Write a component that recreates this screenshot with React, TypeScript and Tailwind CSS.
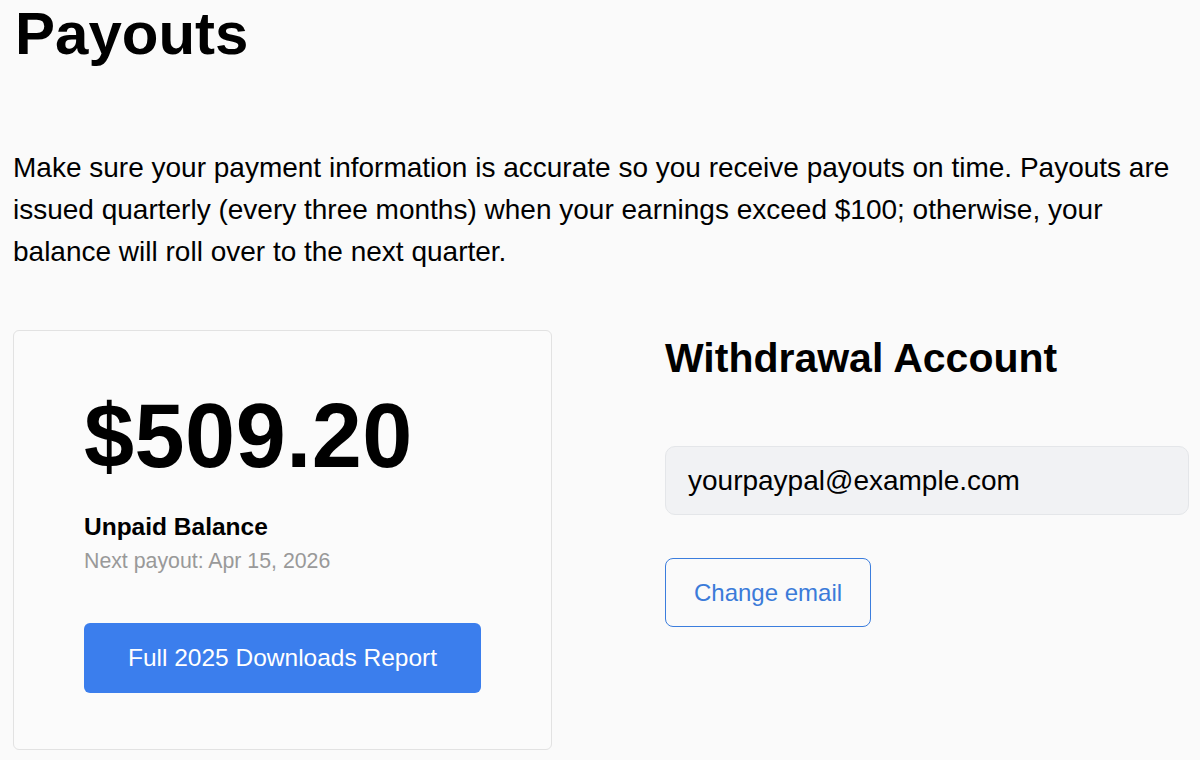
import React from 'react';

const font = { fontFamily: '"Liberation Sans", Arial, Helvetica, sans-serif' };

function BalanceCard() {
  return (
    <div className="w-[539px] h-[420px] shrink-0 rounded-md border border-[#e2e2e2] bg-[#fbfbfb] pl-[70px] pt-[60px]">
      <div className="text-[90px] leading-none font-bold tracking-[0.5px] text-black">$509.20</div>
      <div className="mt-[30px] text-[24.5px] leading-[32px] font-bold text-black">Unpaid Balance</div>
      <div className="mt-[4px] text-[21.3px] leading-[28px] text-[#999999]">Next payout: Apr 15, 2026</div>
      <button className="mt-[48px] w-[397px] h-[70px] rounded-md bg-[#3b7eed] text-white text-[24.5px]">
        Full 2025 Downloads Report
      </button>
    </div>
  );
}

function WithdrawalAccount() {
  return (
    <div className="flex-1 pt-[4px]">
      <h2 className="text-[41px] leading-[48px] font-bold text-black">Withdrawal Account</h2>
      <div className="mt-[64px] h-[69px] w-full flex items-center rounded-[10px] border border-[#e4e6e9] bg-[#f1f2f4] pl-[22px] text-[28px] text-black">
        yourpaypal@example.com
      </div>
      <button className="mt-[43px] w-[206px] h-[69px] rounded-lg border-[1.5px] border-[#3b7ddd] bg-[#fafafa] text-[24px] text-[#3b7bd9]">
        Change email
      </button>
    </div>
  );
}

export default function App() {
  return (
    <div className="min-h-[760px] w-[1200px] bg-[#fafafa] pl-[13px] pr-[11px] overflow-hidden" style={font}>
      <h1 className="pl-[2px] text-[60px] leading-[67px] font-bold text-black">Payouts</h1>
      <p className="mt-[80px] text-[28px] leading-[42px] text-black">
        Make sure your payment information is accurate so you receive payouts on time. Payouts are issued quarterly
        (every three months) when your earnings exceed $100; otherwise, your balance will roll over to the next
        quarter.
      </p>
      <div className="mt-[57px] flex gap-[113px]">
        <BalanceCard />
        <WithdrawalAccount />
      </div>
    </div>
  );
}
